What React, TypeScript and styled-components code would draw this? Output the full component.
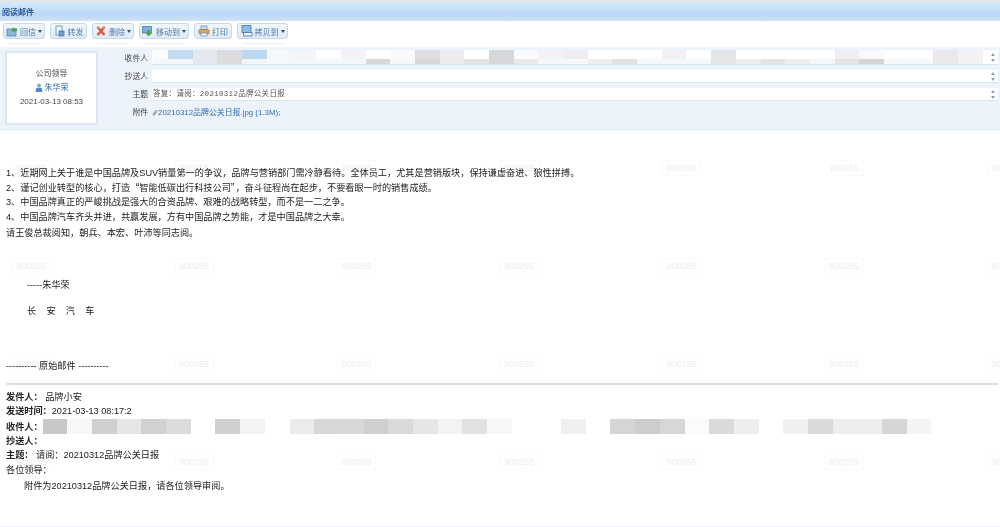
import React from "react";
import styled, { createGlobalStyle } from "styled-components";

// first value of each row is the 15px stub left of the first full mosaic block
const recipientTop = [
  "#fbfcfd", "#c2dbf1", "#e4e8ec", "#dcdcdc", "#bcd8f0", "#f5f8fb", "#f5f5f5", "#ffffff", "#f3f3f3", "#ffffff",
  "#fbfbfb", "#dfdfdf", "#ececec", "#ffffff", "#d6d7da", "#fbfbfb", "#f3f3f3", "#eeeeee", "#ffffff", "#ffffff",
  "#ffffff", "#f1f1f1", "#ffffff", "#e4e5e6", "#ffffff", "#ffffff", "#ffffff", "#ffffff", "#efefef", "#f9f9fb",
  "#ffffff", "#ffffff", "#e9e9e9", "#f2f2f2",
];
const recipientLow = [
  "#f3f7fb", "#f1f6fb", "#e4e8ec", "#dcdcdc", "#f1f6fb", "#f5f8fb", "#f5f8fb", "#f5f8fb", "#f5f8fb", "#d8d8da",
  "#f5f8fb", "#d8d8d8", "#ececec", "#e3e3e3", "#d6d7da", "#e8e8e8", "#f5f8fb", "#f5f8fb", "#eeeeee", "#e2e2e2",
  "#f5f8fb", "#f5f8fb", "#f5f8fb", "#e4e5e6", "#eeeeee", "#e4e4e4", "#eeeeee", "#f5f8fb", "#e4e4e4", "#d5d5d5",
  "#f5f8fb", "#f5f8fb", "#e9e9e9", "#f2f2f2",
];
const originalTo = [
  "#c8c8c8", "#f7f7f7", "#d0d0d0", "#e6e6e6", "#d2d2d2", "#dcdcdc", "#ffffff", "#cfcfcf", "#f3f3f3", "#ffffff",
  "#ebebeb", "#d7d7d7", "#d8d8d8", "#cfcfcf", "#dadada", "#e6e6e6", "#f3f3f3", "#e2e2e2", "#f7f7f7", "#ffffff",
  "#ffffff", "#efefef", "#ffffff", "#d5d5d5", "#cdcdcd", "#d7d7d7", "#fbfbfb", "#dadada", "#eeeeee", "#ffffff",
  "#f0f0f0", "#dadada", "#eeeeee", "#eeeeee", "#d6d6d6", "#f4f4f4", "#ffffff",
];

const stampRows = [0, 1, 2, 3];
const stampCols = [0, 1, 2, 3, 4, 5, 6];

const ReplyIcon = () => (
  <svg width="12" height="12" viewBox="0 0 12 12">
    <rect x="1" y="4" width="9" height="7" fill="#8fb8dc" stroke="#4f86b5" strokeWidth="0.8" />
    <path d="M5 5 L8 2 V3.6 H11 V6.2 H8 V7.8 Z" fill="#46a83c" />
  </svg>
);
const ForwardIcon = () => (
  <svg width="12" height="12" viewBox="0 0 12 12">
    <rect x="2" y="1" width="6" height="9" fill="#eef4fa" stroke="#6f95bb" strokeWidth="0.9" />
    <rect x="5" y="6" width="5" height="5" fill="#6da0cf" stroke="#48749f" strokeWidth="0.7" />
  </svg>
);
const DeleteIcon = () => (
  <svg width="12" height="12" viewBox="0 0 12 12">
    <path d="M2.5 2 L9.5 10 M9.5 2 L2.5 10" stroke="#dd5340" strokeWidth="2.4" />
    <circle cx="3" cy="2.5" r="1.2" fill="#e88a78" />
    <circle cx="9" cy="2.5" r="1.2" fill="#e88a78" />
  </svg>
);
const MoveIcon = () => (
  <svg width="12" height="12" viewBox="0 0 12 12">
    <rect x="0.5" y="1.5" width="9" height="6.5" fill="#7fb0d8" stroke="#4d7fa9" strokeWidth="0.8" />
    <path d="M6.5 11.5 L3.5 8 H5.5 V5 H8 V8 H10 Z" fill="#4aa844" />
  </svg>
);
const PrintIcon = () => (
  <svg width="12" height="12" viewBox="0 0 12 12">
    <rect x="3" y="1" width="6" height="4" fill="#c9d9ea" stroke="#6d8fb0" strokeWidth="0.7" />
    <rect x="1" y="4.5" width="10" height="4.5" rx="1" fill="#d9a55f" stroke="#98743f" strokeWidth="0.7" />
    <rect x="3" y="8" width="6" height="3" fill="#f3f6fa" stroke="#6d8fb0" strokeWidth="0.7" />
  </svg>
);
const CopyIcon = () => (
  <svg width="12" height="12" viewBox="0 0 12 12">
    <rect x="1" y="0.5" width="9" height="7" fill="#8cbce6" stroke="#3f78ad" strokeWidth="0.8" />
    <rect x="2.5" y="7.5" width="8.5" height="3.5" fill="#f0f5fa" stroke="#3f78ad" strokeWidth="0.8" />
  </svg>
);
const PersonIcon = () => (
  <svg width="8" height="10" viewBox="0 0 9 11">
    <circle cx="4.5" cy="2.6" r="2.2" fill="#7fa9de" />
    <path d="M0.8 10 V7.6 Q0.8 5.4 3 5.2 H6 Q8.2 5.4 8.2 7.6 V10 Z" fill="#5587cc" />
  </svg>
);
const ClipIcon = () => (
  <svg width="6" height="8" viewBox="0 0 7 9">
    <path d="M1.2 6 L4.4 1.6 A1 1 0 0 1 5.9 2.8 L2.8 7.2 A0.7 0.7 0 0 1 1.7 6.4 L4.2 3" fill="none" stroke="#72849a" strokeWidth="0.9" />
  </svg>
);

const GlobalStyle = createGlobalStyle`
  html, body {
    margin: 0;
    padding: 0;
    background: #fff;
  }
  body {
    font-family: "Liberation Sans", "Noto Sans CJK SC", sans-serif;
    font-size: 10px;
    color: #333;
  }
`;

const Page = styled.div`
  position: relative;
  width: 1000px;
  height: 527px;
  overflow: hidden;
  background: #fff;
  border-bottom: 1px solid #eef2fb;
  box-sizing: border-box;
`;

const TitleBar = styled.div`
  height: 19px;
  border-top: 2px solid #e3e5e6;
  padding-left: 2px;
  display: flex;
  align-items: center;
  background: linear-gradient(#d5e9fc, #c6e0f9 40%, #b8d6f6 60%, #d0e2f6);
`;

const TitleText = styled.span`
  font-size: 8px;
  font-weight: bold;
  color: #2a5a9f;
  filter: blur(0.35px);
`;

const Toolbar = styled.div`
  position: relative;
  height: 26px;
  display: flex;
  gap: 5px;
  padding: 2px 0 0 3px;
  box-sizing: border-box;
  background: #fff;
`;

const ToolButton = styled.div<{ $width: number; $menu?: boolean }>`
  position: relative;
  width: ${({ $width }) => $width}px;
  height: 16px;
  box-sizing: border-box;
  display: flex;
  align-items: center;
  justify-content: center;
  gap: 2px;
  border: 1px solid #c4d9ee;
  border-radius: 3px;
  background: linear-gradient(#f2f7fc, #dfeaf6);
  font-size: 8px;
  color: #4e7ba8;
  filter: blur(0.3px);

  &::after {
    content: "";
    display: ${({ $menu }) => ($menu ? "block" : "none")};
    position: absolute;
    left: 4px;
    right: 4px;
    bottom: -6px;
    height: 1px;
    background: #eeeeee;
  }
`;

const Caret = styled.i`
  width: 0;
  height: 0;
  border-left: 2px solid transparent;
  border-right: 2px solid transparent;
  border-top: 3px solid #34506f;
`;

const HeaderPanel = styled.div`
  height: 83px;
  box-sizing: border-box;
  display: flex;
  gap: 7px;
  padding: 2px 0 0 5px;
  background: #edf3fb;
  border-top: 1px solid #f0f5fa;
  border-bottom: 1px solid #e2eaf5;
`;

const SenderCard = styled.div`
  width: 93px;
  height: 74px;
  margin-top: 1px;
  box-sizing: border-box;
  flex: none;
  display: flex;
  flex-direction: column;
  align-items: center;
  justify-content: center;
  gap: 2px;
  background: #fff;
  border: 2px solid #dbe6f2;
  font-size: 8px;
  line-height: 12px;
  color: #444;
  filter: blur(0.25px);
`;

const SenderName = styled.div`
  display: flex;
  align-items: center;
  gap: 2px;
  color: #2f6cb5;
`;

const Fields = styled.div`
  flex: 1;
  display: flex;
  flex-direction: column;
  gap: 5px;
`;

const FieldRow = styled.div`
  display: flex;
  align-items: flex-end;
  gap: 4px;
`;

const FieldLabel = styled.label`
  width: 43px;
  flex: none;
  text-align: right;
  font-size: 7.8px;
  line-height: 13px;
  color: #444;
  filter: blur(0.25px);
`;

const FieldBox = styled.div<{ $height?: number }>`
  position: relative;
  width: 846px;
  height: ${({ $height }) => $height ?? 13}px;
  box-sizing: border-box;
  background: #fff;
  border-bottom: 1px solid #dbe5f1;
  padding-left: 1px;
`;

const SubjectText = styled.span`
  font-family: "Liberation Mono", "Noto Sans CJK SC", monospace;
  font-size: 7.5px;
  line-height: 12px;
  letter-spacing: 0.3px;
  color: #555;
  filter: blur(0.25px);
  display: block;
`;

const MosaicStack = styled.div`
  display: flex;
  flex-direction: column;
`;

const MosaicRow = styled.div<{ $height: number }>`
  display: flex;
  height: ${({ $height }) => $height}px;
`;

const MosaicCell = styled.span<{ $shade: string; $width?: number }>`
  flex: none;
  width: ${({ $width }) => $width ?? 24.7}px;
  height: 100%;
  background: ${({ $shade }) => $shade};
`;

const Spinner = styled.div`
  position: absolute;
  right: 3px;
  top: 0;
  bottom: 0;
  display: flex;
  flex-direction: column;
  justify-content: center;
  gap: 3px;
`;

const SpinUp = styled.i`
  width: 0;
  height: 0;
  border-left: 2px solid transparent;
  border-right: 2px solid transparent;
  border-bottom: 3px solid #8c9cc4;
`;

const SpinDown = styled.i`
  width: 0;
  height: 0;
  border-left: 2px solid transparent;
  border-right: 2px solid transparent;
  border-top: 3px solid #8c9cc4;
`;

const AttachLine = styled.div`
  display: flex;
  align-items: center;
  font-size: 7.9px;
  line-height: 13px;
  color: #2f6db0;
  filter: blur(0.25px);
`;

const Content = styled.div`
  position: relative;
  padding: 36px 0 0 6px;
  font-size: 9.17px;
  color: #222;
  filter: blur(0.3px);
`;

const Line = styled.div<{ $gap?: number; $indent?: number }>`
  line-height: 14.7px;
  margin-top: ${({ $gap }) => $gap ?? 0}px;
  padding-left: ${({ $indent }) => $indent ?? 0}px;
  white-space: nowrap;
`;

const Spaced = styled(Line)`
  word-spacing: 7.7px;
`;

const Quote = styled.span`
  font-family: "Noto Sans CJK SC", sans-serif;
  line-height: 0;
`;

const Rule = styled.hr`
  width: 992px;
  height: 2px;
  margin: 9px 0 5px;
  border: none;
  background: #dedede;
`;

const Strong = styled.b`
  font-weight: bold;
  color: #222;
`;

const Inline = styled.div`
  display: flex;
  align-items: center;
  height: 14.7px;
`;

const Stamps = styled.div`
  position: absolute;
  left: 12px;
  top: 160px;
  display: grid;
  grid-template-columns: repeat(7, 39px);
  grid-auto-rows: 16px;
  column-gap: 123.5px;
  row-gap: 82px;
  pointer-events: none;
`;

const Stamp = styled.span`
  border: 1px solid #fbfbfb;
  font-size: 9px;
  line-height: 14px;
  text-align: center;
  color: #eeeeee;
`;

export default function App() {
  return (
    <>
      <GlobalStyle />
      <Page>
        <Stamps>
          {stampRows.flatMap((r) => stampCols.map((c) => <Stamp key={`${r}-${c}`}>900255</Stamp>))}
        </Stamps>
        <TitleBar>
          <TitleText>阅读邮件</TitleText>
        </TitleBar>
        <Toolbar>
          <ToolButton $width={42} $menu><ReplyIcon />回信<Caret /></ToolButton>
          <ToolButton $width={37}><ForwardIcon />转发</ToolButton>
          <ToolButton $width={42} $menu><DeleteIcon />删除<Caret /></ToolButton>
          <ToolButton $width={50} $menu><MoveIcon />移动到<Caret /></ToolButton>
          <ToolButton $width={38}><PrintIcon />打印</ToolButton>
          <ToolButton $width={51} $menu><CopyIcon />拷贝到<Caret /></ToolButton>
        </Toolbar>
        <HeaderPanel>
          <SenderCard>
            <span>公司领导</span>
            <SenderName><PersonIcon />朱华荣</SenderName>
            <span>2021-03-13 08:53</span>
          </SenderCard>
          <Fields>
            <FieldRow>
              <FieldLabel>收件人</FieldLabel>
              <FieldBox $height={15}>
                <MosaicStack>
                  <MosaicRow $height={9}>
                    {recipientTop.map((shade, i) => <MosaicCell key={i} $shade={shade} $width={i === 0 ? 15 : undefined} />)}
                  </MosaicRow>
                  <MosaicRow $height={5}>
                    {recipientLow.map((shade, i) => <MosaicCell key={i} $shade={shade} $width={i === 0 ? 15 : undefined} />)}
                  </MosaicRow>
                </MosaicStack>
                <Spinner><SpinUp /><SpinDown /></Spinner>
              </FieldBox>
            </FieldRow>
            <FieldRow>
              <FieldLabel>抄送人</FieldLabel>
              <FieldBox>
                <Spinner><SpinUp /><SpinDown /></Spinner>
              </FieldBox>
            </FieldRow>
            <FieldRow>
              <FieldLabel>主题</FieldLabel>
              <FieldBox>
                <SubjectText>答复&#xFF1A;请阅&#xFF1A;20210312品牌公关日报</SubjectText>
                <Spinner><SpinUp /><SpinDown /></Spinner>
              </FieldBox>
            </FieldRow>
            <FieldRow>
              <FieldLabel>附件</FieldLabel>
              <AttachLine><ClipIcon />20210312品牌公关日报.jpg (1.3M);</AttachLine>
            </FieldRow>
          </Fields>
        </HeaderPanel>
        <Content>
          <Line>1、近期网上关于谁是中国品牌及SUV销量第一的争议&#xFF0C;品牌与营销部门需冷静看待。全体员工&#xFF0C;尤其是营销版块&#xFF0C;保持谦虚奋进、狼性拼搏。</Line>
          <Line>2、谨记创业转型的核心&#xFF0C;打造<Quote>“</Quote>智能低碳出行科技公司<Quote>”</Quote>&#xFF0C;奋斗征程尚在起步&#xFF0C;不要看眼一时的销售成绩。</Line>
          <Line>3、中国品牌真正的严峻挑战是强大的合资品牌、艰难的战略转型&#xFF0C;而不是一二之争。</Line>
          <Line>4、中国品牌汽车齐头并进&#xFF0C;共赢发展&#xFF0C;方有中国品牌之势能&#xFF0C;才是中国品牌之大幸。</Line>
          <Line $gap={1}>请王俊总裁阅知&#xFF0C;朝兵、本宏、叶沛等同志阅。</Line>
          <Line $gap={37} $indent={21}>-----朱华荣</Line>
          <Spaced $gap={12} $indent={21}>长 安 汽 车</Spaced>
          <Line $gap={40}>---------- 原始邮件 ----------</Line>
          <Rule />
          <Line><Strong>发件人&#xFF1A;</Strong> 品牌小安</Line>
          <Line><Strong>发送时间&#xFF1A;</Strong>2021-03-13 08:17:2</Line>
          <Inline>
            <Strong>收件人&#xFF1A;</Strong>
            <MosaicRow $height={15}>
              {originalTo.map((shade, i) => <MosaicCell key={i} $shade={shade} />)}
            </MosaicRow>
          </Inline>
          <Line><Strong>抄送人&#xFF1A;</Strong></Line>
          <Line><Strong>主题&#xFF1A;</Strong> 请阅&#xFF1A;20210312品牌公关日报</Line>
          <Line>各位领导&#xFF1A;</Line>
          <Line $gap={1} $indent={18}>附件为20210312品牌公关日报&#xFF0C;请各位领导审阅。</Line>
        </Content>
      </Page>
    </>
  );
}
